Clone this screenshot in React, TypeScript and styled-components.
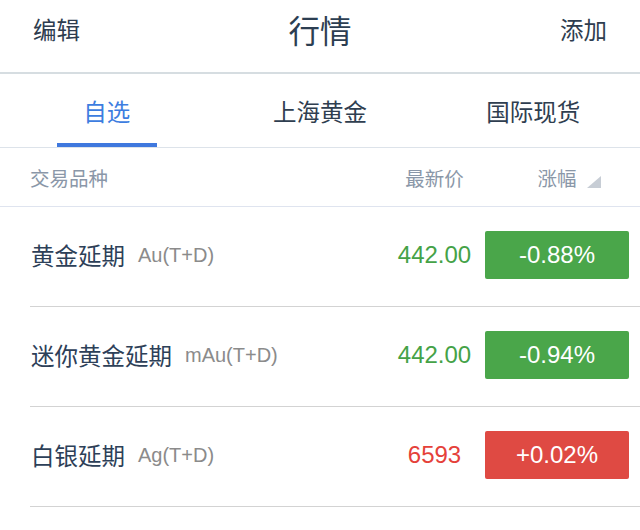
import React from "react";
import styled, { createGlobalStyle } from "styled-components";

const GlobalStyle = createGlobalStyle`
  html, body { margin: 0; padding: 0; background: #ffffff; }
  body {
    font-family: "Liberation Sans", "Noto Sans CJK SC", sans-serif;
    -webkit-font-smoothing: antialiased;
  }
  * { box-sizing: border-box; }
`;

const Page = styled.div`
  width: 640px;
  background: #ffffff;
`;

const NavBar = styled.header`
  height: 74px;
  padding: 12px 33px 0;
  display: grid;
  grid-template-columns: 1fr auto 1fr;
  align-items: start;
  border-bottom: 2px solid #d6dde1;
`;

const NavAction = styled.span<{ $align: "left" | "right" }>`
  font-family: "Noto Sans CJK SC", sans-serif;
  font-size: 23.5px;
  line-height: 34px;
  color: #2e3d4f;
  text-align: ${(p) => p.$align};
`;

const NavTitle = styled.h1`
  margin: 0;
  font-family: "Noto Sans CJK SC", sans-serif;
  font-weight: 400;
  font-size: 31.5px;
  line-height: 34px;
  color: #2c3e52;
`;

const TabBar = styled.nav`
  height: 74px;
  display: grid;
  grid-template-columns: repeat(3, 1fr);
  border-bottom: 1px solid #dde3ea;
`;

const Tab = styled.div<{ $active?: boolean }>`
  position: relative;
  display: flex;
  align-items: center;
  justify-content: center;
  font-family: "Noto Sans CJK SC", sans-serif;
  font-size: 23.5px;
  color: ${(p) => (p.$active ? "#3d7de0" : "#2f3e50")};
`;

const TabIndicator = styled.span`
  position: absolute;
  bottom: 0;
  left: 50%;
  width: 100px;
  height: 4px;
  margin-left: -50px;
  background: #3f78de;
`;

const HeadRow = styled.div`
  height: 59px;
  padding: 0 11px 0 30px;
  display: grid;
  grid-template-columns: 1fr 101px 144px;
  align-items: center;
  border-bottom: 1px solid #dfe4ef;
`;

const HeadCell = styled.span<{ $center?: boolean }>`
  font-family: "Noto Sans CJK SC", sans-serif;
  font-size: 19.5px;
  color: #8a97a8;
  text-align: ${(p) => (p.$center ? "center" : "left")};
`;

const SortLabel = styled.span`
  position: relative;
  &::after {
    content: "";
    position: absolute;
    left: calc(100% + 10px);
    bottom: 4px;
    width: 0;
    height: 0;
    border-left: 14px solid transparent;
    border-bottom: 12px solid #c7cdd5;
  }
`;

const Row = styled.div`
  height: 100px;
  margin-left: 30px;
  padding: 0 11px 3px 1px;
  display: grid;
  grid-template-columns: 1fr 101px 144px;
  align-items: center;
  border-bottom: 1px solid #d3d3d3;
`;

const NameCell = styled.div`
  display: flex;
  align-items: center;
  gap: 13px;
`;

const Name = styled.span`
  font-family: "Noto Sans CJK SC", sans-serif;
  font-size: 23.5px;
  color: #2d4058;
`;

const Code = styled.span`
  font-family: "Liberation Sans", sans-serif;
  font-size: 20px;
  color: #8b8b8b;
`;

const Price = styled.span<{ $up: boolean }>`
  font-family: "Liberation Sans", sans-serif;
  font-size: 24px;
  text-align: center;
  color: ${(p) => (p.$up ? "#e5413a" : "#45a247")};
`;

const Change = styled.span<{ $up: boolean }>`
  height: 48px;
  border-radius: 2px;
  display: flex;
  align-items: center;
  justify-content: center;
  font-family: "Liberation Sans", sans-serif;
  font-size: 24px;
  color: #ffffff;
  background: ${(p) => (p.$up ? "#df4a43" : "#4aa64a")};
`;

type Item = { name: string; code: string; price: string; change: string; up: boolean };

const items: Item[] = [
  { name: "黄金延期", code: "Au(T+D)", price: "442.00", change: "-0.88%", up: false },
  { name: "迷你黄金延期", code: "mAu(T+D)", price: "442.00", change: "-0.94%", up: false },
  { name: "白银延期", code: "Ag(T+D)", price: "6593", change: "+0.02%", up: true },
];

export default function App() {
  return (
    <Page>
      <GlobalStyle />
      <NavBar>
        <NavAction $align="left">编辑</NavAction>
        <NavTitle>行情</NavTitle>
        <NavAction $align="right">添加</NavAction>
      </NavBar>
      <TabBar>
        <Tab $active>
          自选
          <TabIndicator />
        </Tab>
        <Tab>上海黄金</Tab>
        <Tab>国际现货</Tab>
      </TabBar>
      <HeadRow>
        <HeadCell>交易品种</HeadCell>
        <HeadCell $center>最新价</HeadCell>
        <HeadCell $center>
          <SortLabel>涨幅</SortLabel>
        </HeadCell>
      </HeadRow>
      {items.map((it) => (
        <Row key={it.name}>
          <NameCell>
            <Name>{it.name}</Name>
            <Code>{it.code}</Code>
          </NameCell>
          <Price $up={it.up}>{it.price}</Price>
          <Change $up={it.up}>{it.change}</Change>
        </Row>
      ))}
    </Page>
  );
}
